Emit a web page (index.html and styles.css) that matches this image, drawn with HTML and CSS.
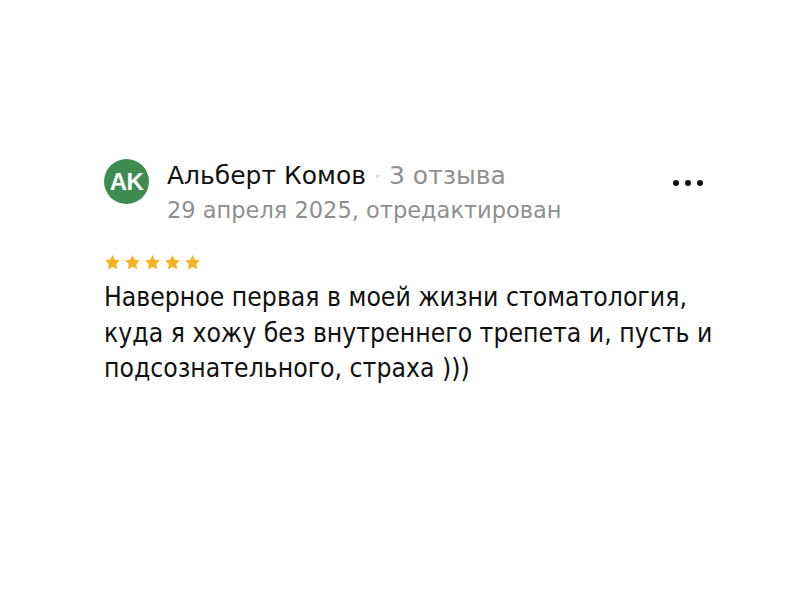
FILE: index.html
```html
<!DOCTYPE html>
<html lang="ru">
<head>
<meta charset="utf-8">
<link rel="stylesheet" href="styles.css">
</head>
<body>
<div class="review">
  <div class="head">
    <div class="avatar">AK</div>
    <div class="meta">
      <div class="line1"><span class="name">Альберт Комов</span><span class="dot">•</span><span class="count">3 отзыва</span></div>
      <div class="date">29 апреля 2025, отредактирован</div>
    </div>
    <div class="more"><span></span><span></span><span></span></div>
  </div>
  <div class="stars">
    <svg viewBox="0 0 20 20"><path d="M10 1.2l2.7 5.5 6 .9-4.35 4.2 1.05 6L10 14.9l-5.4 2.9 1.05-6L1.3 7.6l6-.9z"/></svg>
    <svg viewBox="0 0 20 20"><path d="M10 1.2l2.7 5.5 6 .9-4.35 4.2 1.05 6L10 14.9l-5.4 2.9 1.05-6L1.3 7.6l6-.9z"/></svg>
    <svg viewBox="0 0 20 20"><path d="M10 1.2l2.7 5.5 6 .9-4.35 4.2 1.05 6L10 14.9l-5.4 2.9 1.05-6L1.3 7.6l6-.9z"/></svg>
    <svg viewBox="0 0 20 20"><path d="M10 1.2l2.7 5.5 6 .9-4.35 4.2 1.05 6L10 14.9l-5.4 2.9 1.05-6L1.3 7.6l6-.9z"/></svg>
    <svg viewBox="0 0 20 20"><path d="M10 1.2l2.7 5.5 6 .9-4.35 4.2 1.05 6L10 14.9l-5.4 2.9 1.05-6L1.3 7.6l6-.9z"/></svg>
  </div>
  <p class="text">Наверное первая в моей жизни стоматология, куда я хожу без внутреннего трепета и, пусть и подсознательного, страха )))</p>
</div>
</body>
</html>
```
FILE: styles.css
```css
html, body { margin: 0; padding: 0; background: #fff; }
body { width: 799px; height: 600px; overflow: hidden; }
.review { padding: 158px 0 0 104px; width: 620px; }
.head { display: flex; align-items: flex-start; }
.avatar {
  width: 45px; height: 45px; border-radius: 50%;
  background: #3e8c50; color: #fff; flex: none;
  font-family: "Liberation Sans", sans-serif; font-weight: 700; font-size: 24px;
  display: flex; align-items: center; justify-content: center;
  letter-spacing: -0.5px; margin-top: 1px;
}
.meta { margin-left: 18px; flex: 1; font-family: "DejaVu Sans", sans-serif; }
.line1 { font-size: 25px; line-height: 34px; display: flex; align-items: center; }
.name { color: #111; }
.dot { color: #d6d6d6; font-size: 12px; margin: 2px 8px 0 8px; }
.count { color: #8f8f8f; }
.date { color: #8f8f8f; font-size: 22.5px; line-height: 32px; }
.more { display: flex; gap: 6px; margin: 22px 21px 0 0; }
.more span { width: 6px; height: 6px; border-radius: 50%; background: #111; }
.stars { display: flex; gap: 3px; margin-top: 28px; }
.stars svg { width: 17px; height: 17px; fill: #f5b324; }
.text {
  margin: 9px 0 0; font-family: "DejaVu Sans", sans-serif; font-stretch: condensed;
  font-size: 26.3px; line-height: 35.5px; color: #111;
}
```
